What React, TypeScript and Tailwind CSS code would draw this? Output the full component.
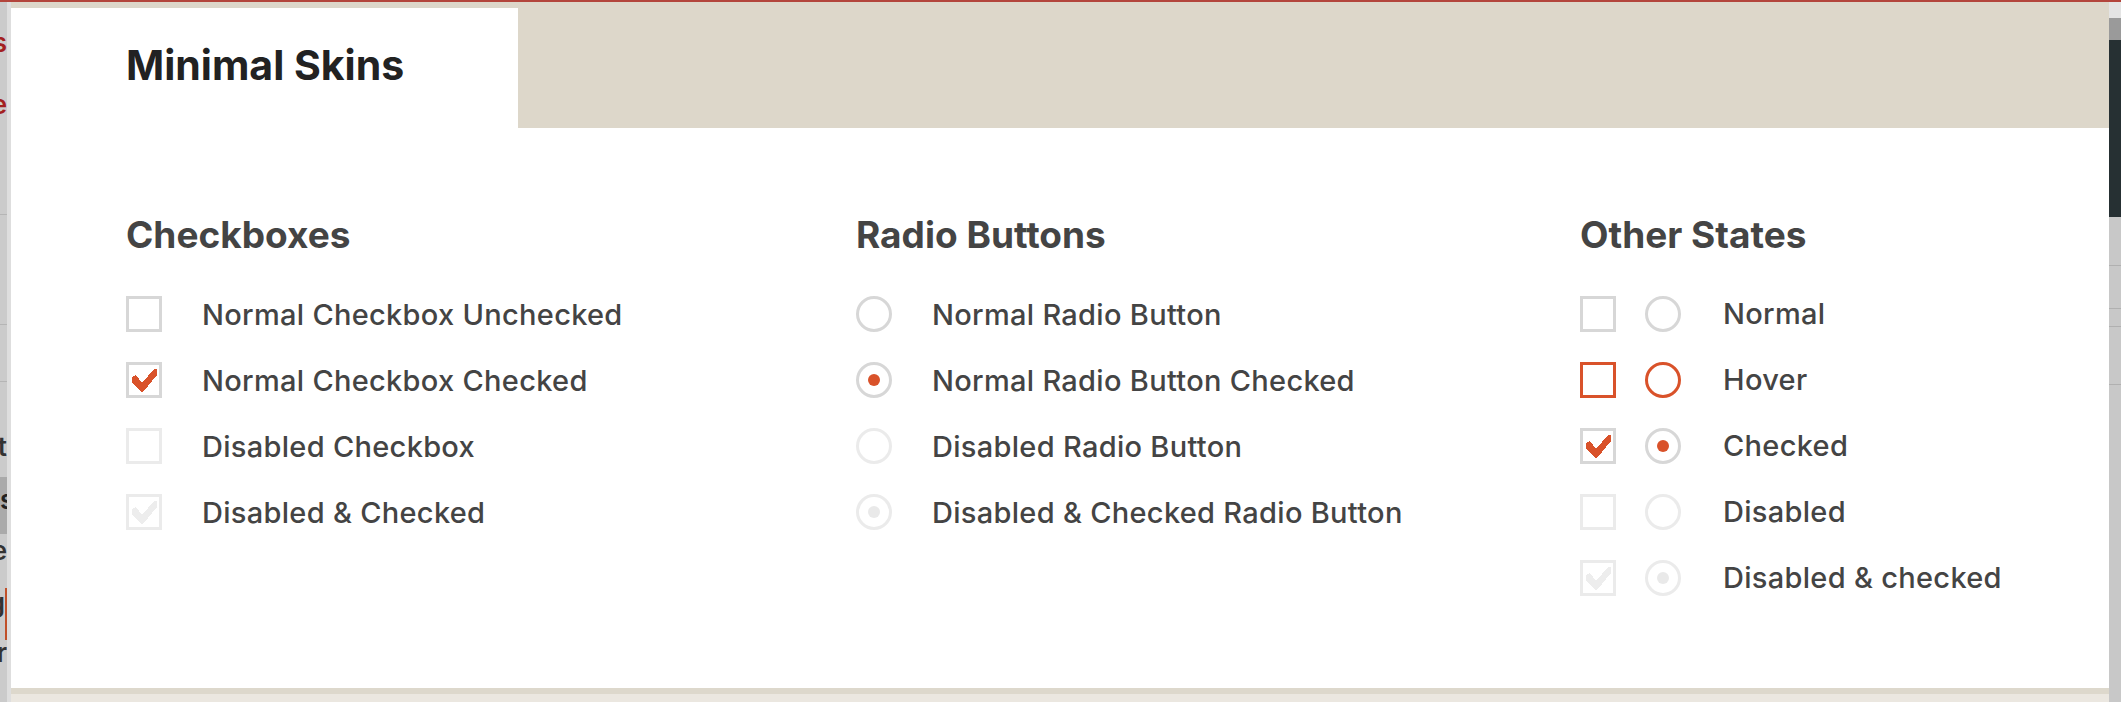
import React from "react";

const ORANGE = "#d9522a";

type BoxState = "normal" | "hover" | "checked" | "disabled" | "disabledChecked";

const Check: React.FC<{ color: string }> = ({ color }) => (
  <svg width="30" height="30" viewBox="0 0 30 30" className="block" shapeRendering="crispEdges">
    <polygon points="3,12 7,10 13,18 25,4 28,4 28,10 14,27 12,27 3,17" fill={color} />
  </svg>
);

const Checkbox: React.FC<{ state: BoxState }> = ({ state }) => {
  const border =
    state === "hover"
      ? "border-[#d9522a]"
      : state === "disabled" || state === "disabledChecked"
        ? "border-[#ebebeb]"
        : "border-[#d7d7d7]";
  return (
    <div className={`h-[36px] w-[36px] shrink-0 border-[3px] bg-white ${border} flex items-center justify-center`}>
      {state === "checked" && <Check color={ORANGE} />}
      {state === "disabledChecked" && <Check color="#ededed" />}
    </div>
  );
};

const Radio: React.FC<{ state: BoxState }> = ({ state }) => {
  const border =
    state === "hover"
      ? "border-[#d9522a]"
      : state === "disabled" || state === "disabledChecked"
        ? "border-[#ebebeb]"
        : "border-[#d7d7d7]";
  return (
    <div className={`h-[36px] w-[36px] shrink-0 rounded-full border-[3px] bg-white ${border} flex items-center justify-center`}>
      {state === "checked" && <div className="h-[12px] w-[12px] rounded-full bg-[#d9522a]" />}
      {state === "disabledChecked" && <div className="h-[12px] w-[12px] rounded-full bg-[#e9e9e9]" />}
    </div>
  );
};

const Label: React.FC<{ children: React.ReactNode }> = ({ children }) => (
  <span className="text-[29px] leading-none font-medium tracking-[0.3px] text-[#444444]">{children}</span>
);

const Heading: React.FC<{ children: React.ReactNode }> = ({ children }) => (
  <h2 className="h-[44px] text-[37px] leading-[44px] font-bold text-[#444444]">{children}</h2>
);

const checkRows: { state: BoxState; text: string }[] = [
  { state: "normal", text: "Normal Checkbox Unchecked" },
  { state: "checked", text: "Normal Checkbox Checked" },
  { state: "disabled", text: "Disabled Checkbox" },
  { state: "disabledChecked", text: "Disabled & Checked" },
];

const radioRows: { state: BoxState; text: string }[] = [
  { state: "normal", text: "Normal Radio Button" },
  { state: "checked", text: "Normal Radio Button Checked" },
  { state: "disabled", text: "Disabled Radio Button" },
  { state: "disabledChecked", text: "Disabled & Checked Radio Button" },
];

const otherRows: { state: BoxState; text: string }[] = [
  { state: "normal", text: "Normal" },
  { state: "hover", text: "Hover" },
  { state: "checked", text: "Checked" },
  { state: "disabled", text: "Disabled" },
  { state: "disabledChecked", text: "Disabled & checked" },
];

// page behind the modal, only its last letters show on the left edge
const LeftStrip = () => (
  <div className="relative w-[11px] shrink-0 overflow-hidden bg-[#cbcbcb] text-[26px] leading-none font-semibold">
    <div className="absolute top-0 right-0 h-full w-[4px] bg-[#dedede]" />
    <div className="flex flex-col items-end pr-[4px]">
      <div className="h-[28px]" />
      <span className="h-[62px] text-[#a32020]">s</span>
      <span className="h-[122px] text-[#a32020]">e</span>
      <div className="h-[1px] w-full bg-[#b5b5b5]" />
      <div className="h-[109px]" />
      <div className="h-[1px] w-full bg-[#b5b5b5]" />
      <div className="h-[56px]" />
      <div className="h-[1px] w-full bg-[#b5b5b5]" />
      <div className="h-[52px]" />
      <span className="h-[43px] text-[#333333]">t</span>
      <span className="h-[57px] w-full bg-[#aaaaaa] pt-[10px] text-right text-[#222222]">s</span>
      <span className="h-[54px] pt-[4px] text-[#333333]">e</span>
      <span className="h-[52px] border-r-[2px] border-[#c0502a] pt-[2px] text-[#333333]">g</span>
      <span className="h-[44px] text-[#333333]">r</span>
    </div>
  </div>
);

const RightStrip = () => (
  <div className="flex flex-1 flex-col bg-[#c8c8c8]">
    <div className="h-[16px] bg-[#e4e4e4]" />
    <div className="h-[22px] bg-[#9a9a9a]" />
    <div className="h-[177px] bg-[#263033]" />
    <div className="h-[48px]" />
    <div className="h-[1px] bg-[#b0b0b0]" />
    <div className="h-[42px]" />
    <div className="h-[1px] bg-[#b0b0b0]" />
    <div className="h-[17px]" />
    <div className="h-[1px] bg-[#b0b0b0]" />
    <div className="h-[57px]" />
    <div className="h-[1px] bg-[#b0b0b0]" />
  </div>
);

export default function App() {
  return (
    <div className="flex h-[702px] w-[2121px] flex-col overflow-hidden bg-[#cbcbcb]" style={{ fontFamily: "Inter, 'Noto Sans', sans-serif" }}>
      <div className="h-[2px] shrink-0 bg-[#b3453c]" />
      <div className="flex flex-1">
        <LeftStrip />
        <div className="flex w-[2098px] shrink-0 flex-col">
          <div className="flex h-[126px] shrink-0 bg-[#ddd7ca]">
            <div className="mt-[6px] h-[120px] w-[507px] bg-white pt-[32px] pl-[115px]">
              <h1 className="text-[41px] leading-[50px] font-bold text-[#222222]">Minimal Skins</h1>
            </div>
          </div>
          <div className="flex flex-1 bg-white pt-[85px] pl-[115px]">
            <div className="w-[730px]">
              <Heading>Checkboxes</Heading>
              <div className="mt-[24px] flex flex-col">
                {checkRows.map((r) => (
                  <div key={r.text} className="flex h-[66px] items-center gap-[40px]">
                    <Checkbox state={r.state} />
                    <Label>{r.text}</Label>
                  </div>
                ))}
              </div>
            </div>
            <div className="w-[724px]">
              <Heading>Radio Buttons</Heading>
              <div className="mt-[24px] flex flex-col">
                {radioRows.map((r) => (
                  <div key={r.text} className="flex h-[66px] items-center gap-[40px]">
                    <Radio state={r.state} />
                    <Label>{r.text}</Label>
                  </div>
                ))}
              </div>
            </div>
            <div className="flex-1">
              <Heading>Other States</Heading>
              <div className="mt-[24px] flex flex-col">
                {otherRows.map((r) => (
                  <div key={r.text} className="flex h-[66px] items-center">
                    <Checkbox state={r.state} />
                    <div className="ml-[29px]">
                      <Radio state={r.state} />
                    </div>
                    <div className="ml-[42px]">
                      <Label>{r.text}</Label>
                    </div>
                  </div>
                ))}
              </div>
            </div>
          </div>
          <div className="h-[6px] shrink-0 bg-[#ddd8cc]" />
          <div className="h-[8px] shrink-0 bg-[#ebe7e0]" />
        </div>
        <RightStrip />
      </div>
    </div>
  );
}
